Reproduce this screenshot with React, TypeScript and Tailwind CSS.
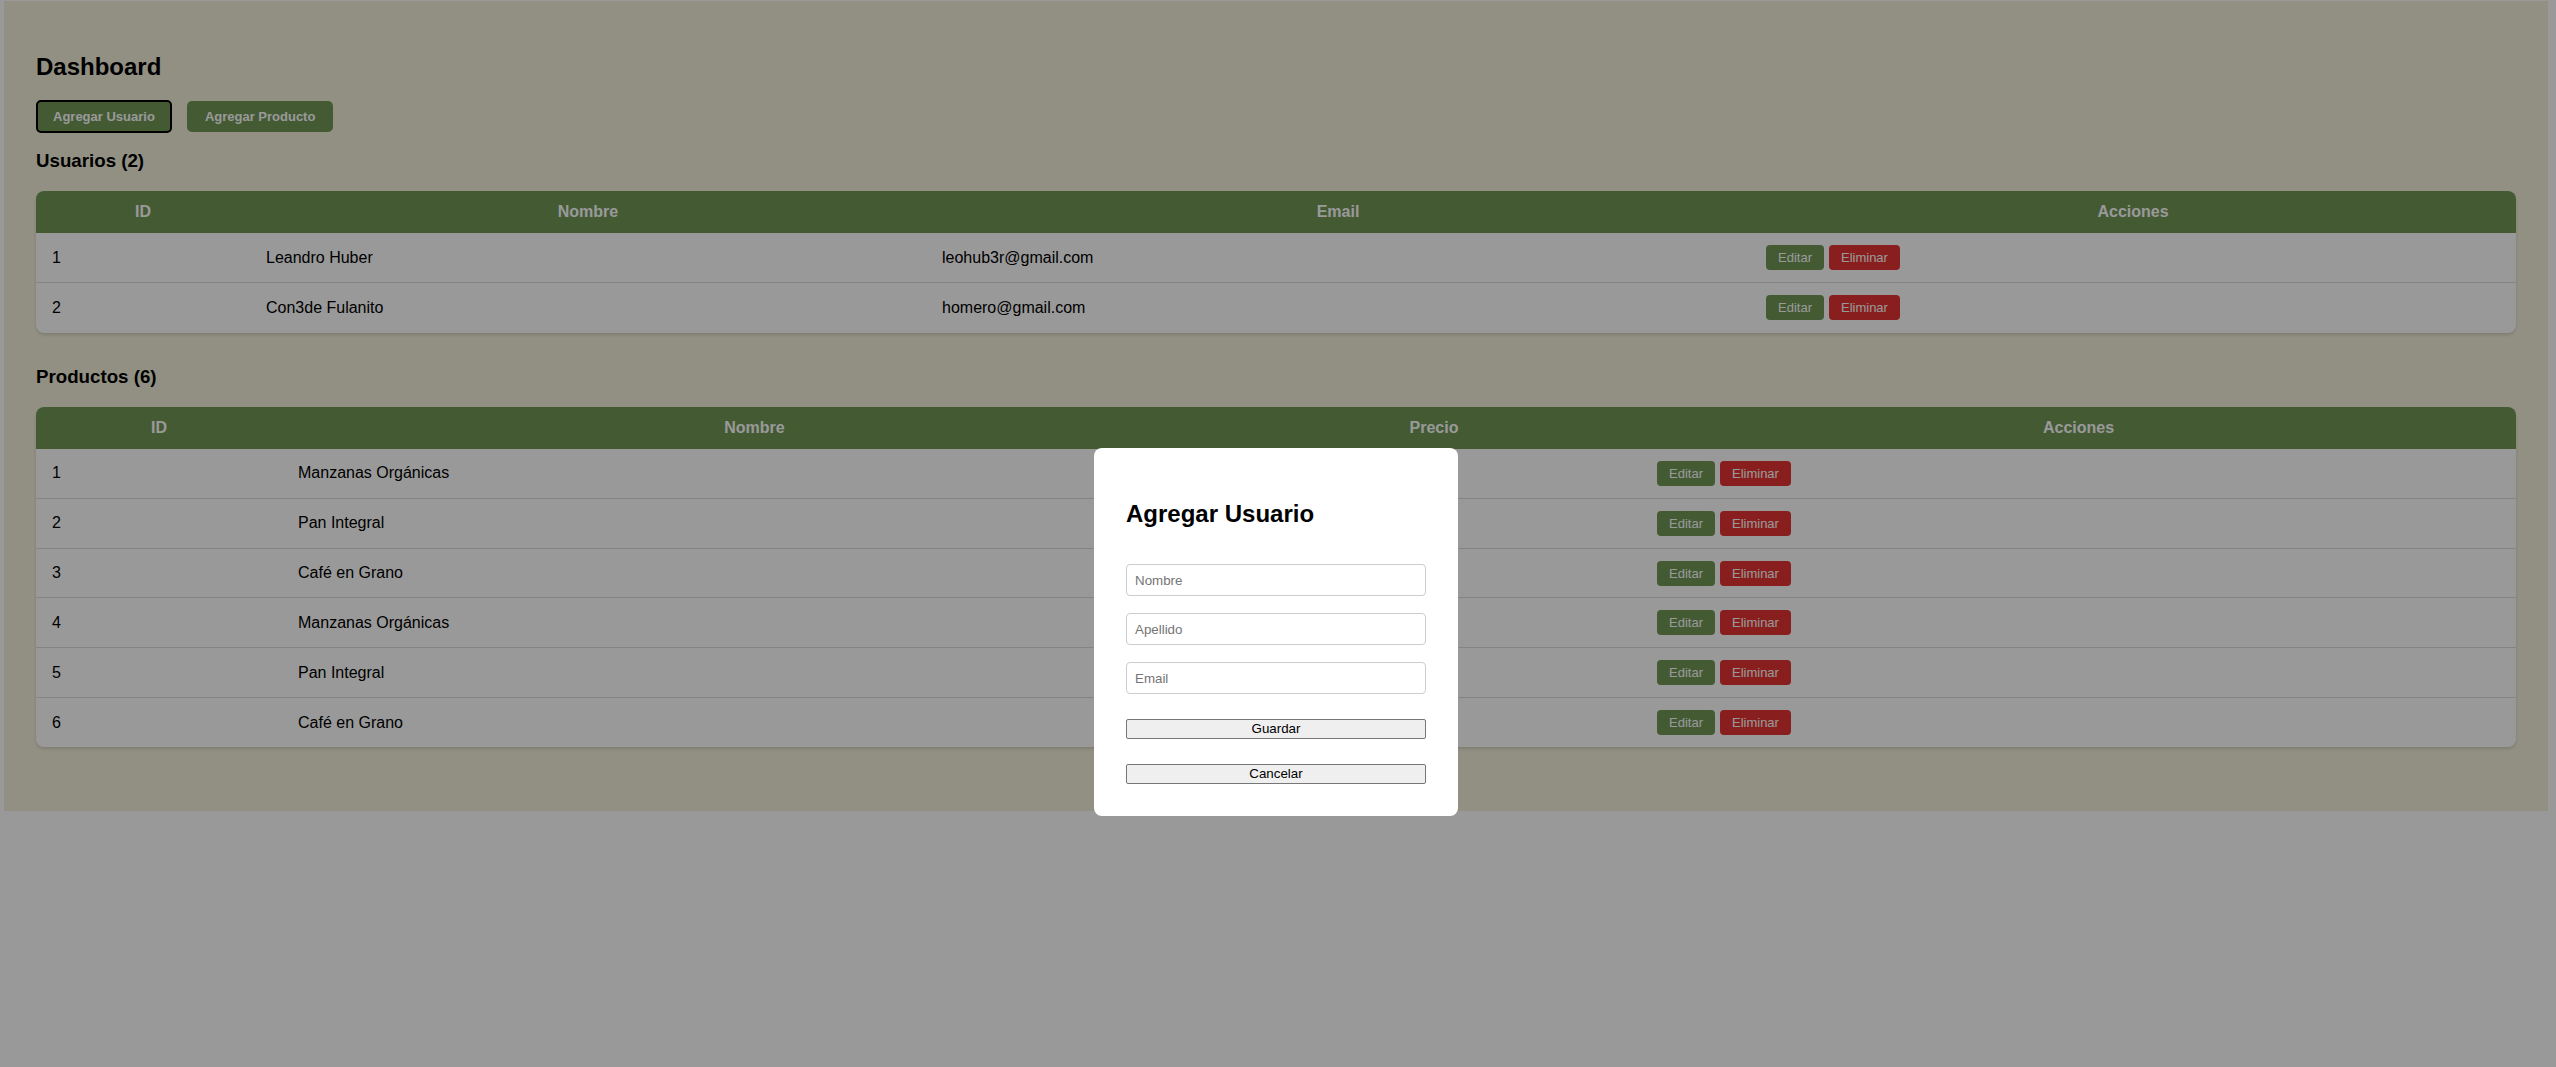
import React from "react";

/* ─────────────── Data ──────────────── */
type Usuario = { id: number; nombre: string; email: string };
type Producto = { id: number; nombre: string };

const usuarios: Usuario[] = [
    { id: 1, nombre: "Leandro Huber", email: "leohub3r@gmail.com" },
    { id: 2, nombre: "Con3de Fulanito", email: "homero@gmail.com" },
];

// precio column sits behind the modal, so it stays empty here
const productos: Producto[] = [
    { id: 1, nombre: "Manzanas Orgánicas" },
    { id: 2, nombre: "Pan Integral" },
    { id: 3, nombre: "Café en Grano" },
    { id: 4, nombre: "Manzanas Orgánicas" },
    { id: 5, nombre: "Pan Integral" },
    { id: 6, nombre: "Café en Grano" },
];

const FONT = { fontFamily: '"Liberation Sans", Arial, sans-serif' };

/* ─────────────── Row actions ──────────────── */
function Acciones() {
    return (
        <div className="flex items-center gap-[5px]">
            <button className="h-[25px] px-3 rounded bg-[#709655] text-white text-[13px] leading-none">
                Editar
            </button>
            <button className="h-[25px] px-3 rounded bg-[#e53333] text-white text-[13px] leading-none">
                Eliminar
            </button>
        </div>
    );
}

/* ─────────────── Generic table ──────────────── */
type Col = { title: string; width: string };

function Tabla({ cols, rows }: { cols: Col[]; rows: React.ReactNode[][] }) {
    return (
        <div className="w-full rounded-lg overflow-hidden bg-white shadow-[0_2px_3px_rgba(0,0,0,0.12)]">
            <table className="w-full table-fixed border-collapse">
                <colgroup>
                    {cols.map((c) => (
                        <col key={c.title} className={c.width} />
                    ))}
                </colgroup>
                <thead>
                    <tr className="bg-[#709655] text-white">
                        {cols.map((c) => (
                            <th key={c.title} className="h-[42px] px-4 text-center text-[16px] font-bold">
                                {c.title}
                            </th>
                        ))}
                    </tr>
                </thead>
                <tbody>
                    {rows.map((r, i) => (
                        <tr key={i} className={i < rows.length - 1 ? "border-b border-[#dddddd]" : ""}>
                            {r.map((cell, j) => (
                                <td key={j} className="h-[49.8px] px-4 text-left text-[16px] text-black">
                                    {cell}
                                </td>
                            ))}
                        </tr>
                    ))}
                </tbody>
            </table>
        </div>
    );
}

/* ─────────────── Modal ──────────────── */
function AgregarUsuarioModal() {
    return (
        <div className="fixed inset-0 z-10 bg-black/40 flex justify-center items-start pt-[448px]">
            <div className="w-[364px] mr-[4px] bg-white rounded-lg px-8 pt-8 pb-8 flex flex-col">
                <h2 className="mt-[20px] text-[24px] leading-[28px] font-bold text-black">Agregar Usuario</h2>
                <input
                    placeholder="Nombre"
                    className="mt-[36px] h-[32px] w-full border border-[#cccccc] rounded px-2 text-[13.33px] placeholder:text-[#757575] outline-none"
                />
                <input
                    placeholder="Apellido"
                    className="mt-[17px] h-[32px] w-full border border-[#cccccc] rounded px-2 text-[13.33px] placeholder:text-[#757575] outline-none"
                />
                <input
                    placeholder="Email"
                    className="mt-[17px] h-[32px] w-full border border-[#cccccc] rounded px-2 text-[13.33px] placeholder:text-[#757575] outline-none"
                />
                <button className="mt-[25px] h-[20px] w-full bg-[#efefef] border border-[#767676] rounded-[2px] text-[13.33px] leading-none text-black">
                    Guardar
                </button>
                <button className="mt-[25px] h-[20px] w-full bg-[#efefef] border border-[#767676] rounded-[2px] text-[13.33px] leading-none text-black">
                    Cancelar
                </button>
            </div>
        </div>
    );
}

/* ─────────────── App ──────────────── */
export default function App() {
    return (
        <div className="min-h-screen bg-white pt-[1px] pl-[4px]" style={FONT}>
            <div className="w-[2544px] h-[810px] bg-[#f3f0da] px-8 pt-[52px]">
                <h2 className="text-[24px] leading-[28px] font-bold text-black">Dashboard</h2>

                {/* Top actions */}
                <div className="mt-[19px] flex items-center gap-[15px]">
                    <button className="h-[33px] px-[15px] rounded-[5px] border-2 border-black bg-[#709655] text-white text-[13px] font-bold">
                        Agregar Usuario
                    </button>
                    <button className="h-[31px] px-[18px] rounded-[5px] bg-[#709655] text-white text-[13px] font-bold">
                        Agregar Producto
                    </button>
                </div>

                {/* Usuarios */}
                <h3 className="mt-[17px] text-[18.72px] leading-[22px] font-bold text-black">Usuarios (2)</h3>
                <div className="mt-[19px]">
                    <Tabla
                        cols={[
                            { title: "ID", width: "w-[214px]" },
                            { title: "Nombre", width: "w-[676px]" },
                            { title: "Email", width: "w-[824px]" },
                            { title: "Acciones", width: "w-[766px]" },
                        ]}
                        rows={usuarios.map((u) => [u.id, u.nombre, u.email, <Acciones />])}
                    />
                </div>

                {/* Productos */}
                <h3 className="mt-[33px] text-[18.72px] leading-[22px] font-bold text-black">Productos (6)</h3>
                <div className="mt-[19px]">
                    <Tabla
                        cols={[
                            { title: "ID", width: "w-[246px]" },
                            { title: "Nombre", width: "w-[945px]" },
                            { title: "Precio", width: "w-[414px]" },
                            { title: "Acciones", width: "w-[875px]" },
                        ]}
                        rows={productos.map((p) => [p.id, p.nombre, "", <Acciones />])}
                    />
                </div>
            </div>

            <AgregarUsuarioModal />
        </div>
    );
}
